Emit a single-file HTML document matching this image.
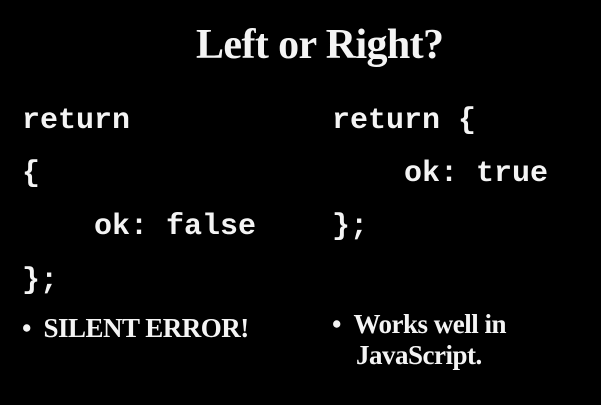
<!DOCTYPE html>
<html><head><meta charset="utf-8"><style>
html,body{margin:0;padding:0;background:#000;}
body{width:601px;height:405px;position:relative;overflow:hidden;color:#f4f4f4;}
.t{position:absolute;white-space:pre;line-height:1;}
.s{font-family:"Liberation Serif",serif;font-weight:bold;}
.m{font-family:"Liberation Mono",monospace;font-weight:bold;font-size:30px;}
</style></head><body>
<div class="t s" style="left:196px;top:24px;font-size:42px;letter-spacing:-0.6px;">Left or Right?</div>
<div class="t m" style="left:22px;top:106px;">return</div>
<div class="t m" style="left:22px;top:159px;">{</div>
<div class="t m" style="left:22px;top:212px;">    ok: false</div>
<div class="t m" style="left:22px;top:266px;">};</div>
<div class="t m" style="left:332px;top:106px;">return {</div>
<div class="t m" style="left:332px;top:159px;">    ok: true</div>
<div class="t m" style="left:332px;top:212px;">};</div>
<div class="t s" style="left:22px;top:315px;font-size:27px;letter-spacing:-0.5px;">•&nbsp;&nbsp;SILENT ERROR!</div>
<div class="t s" style="left:332px;top:311px;font-size:27px;letter-spacing:-0.5px;">•&nbsp;&nbsp;Works well in</div>
<div class="t s" style="left:356px;top:342px;font-size:27px;letter-spacing:-0.5px;">JavaScript.</div>
</body></html>
